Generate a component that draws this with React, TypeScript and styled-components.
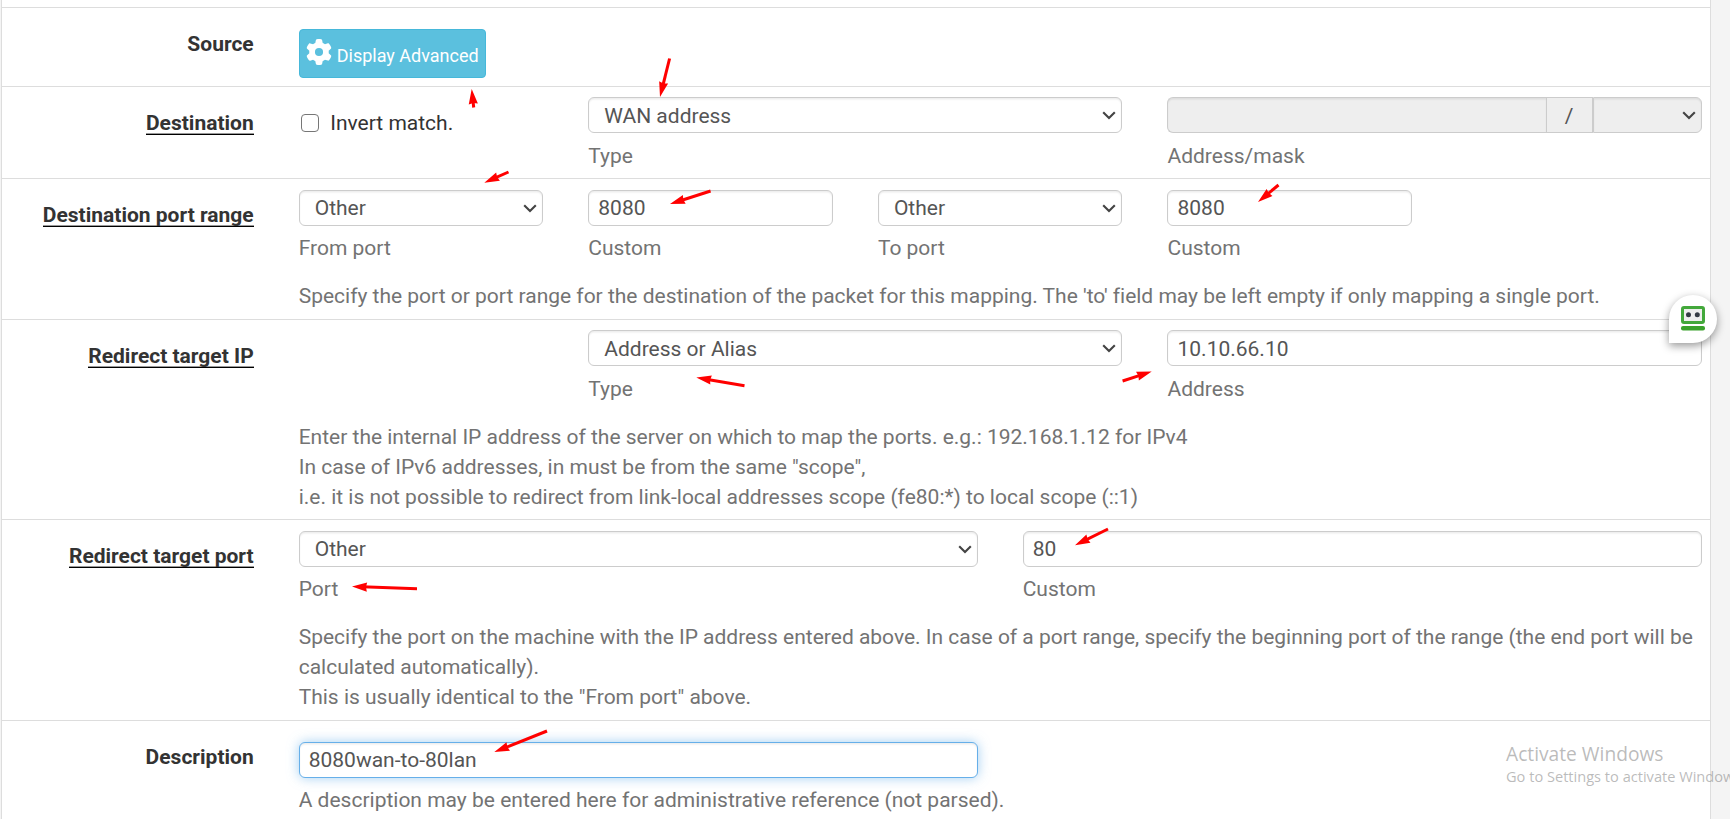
import React from "react";
import styled, { createGlobalStyle, css } from "styled-components";
import { FaGear } from "react-icons/fa6";

const GlobalStyle = createGlobalStyle`
  *, *::before, *::after { box-sizing: border-box; }
  html, body { margin: 0; height: 100%; overflow: hidden; background: #f4f4f4; }
  body { font-family: Roboto, "Liberation Sans", sans-serif; font-size: 21px; line-height: 30px; color: #333; }
`;

const Page = styled.div`
  position: relative;
  width: 1730px;
  height: 819px;
  padding-left: 1px;
  overflow: hidden;
  background: #f4f4f4;
`;

const Panel = styled.main`
  width: 1710px;
  height: 819px;
  padding-top: 7px;
  background: #fff;
  border-left: 1px solid #ddd;
  border-right: 1px solid #ddd;
`;

const Row = styled.section<{ $height: number; $top: number }>`
  display: flex;
  height: ${(p) => p.$height}px;
  padding-top: ${(p) => p.$top}px;
  border-top: 1px solid #ddd;
`;

const LabelCell = styled.div<{ $offset: number }>`
  flex: none;
  width: 251.7px;
  margin-right: 45px;
  padding-top: ${(p) => p.$offset}px;
  text-align: right;
  font-weight: 700;
  line-height: 25px;
  white-space: nowrap;
`;

const LabelText = styled.span<{ $required?: boolean }>`
  display: inline-block;
  height: 24px;
  ${(p) => p.$required && css`border-bottom: 1px solid #000; box-shadow: inset 0 -1px #999;`}
`;

const Content = styled.div`
  flex: none;
  width: 1403px;
`;

const Fields = styled.div<{ $columns: number }>`
  display: grid;
  grid-template-columns: repeat(${(p) => p.$columns}, 1fr);
  column-gap: 45px;
`;

const Field = styled.div<{ $span?: number; $start?: number }>`
  grid-column: ${(p) => (p.$start ? p.$start : "auto")} / span ${(p) => p.$span ?? 1};
  min-width: 0;
`;

const control = css`
  display: flex;
  align-items: center;
  height: 36px;
  border: 1px solid #ccc;
  border-radius: 6px;
  background: #fff;
  box-shadow: inset 0 1.5px 1.5px rgba(0, 0, 0, 0.075);
  color: #555;
`;

const TextBox = styled.div<{ $focused?: boolean; $drop?: number }>`
  ${control}
  padding: ${(p) => p.$drop ?? 0}px 9px 0;
  ${(p) => p.$focused && css`
    border-color: #66afe9;
    box-shadow: inset 0 1.5px 1.5px rgba(0, 0, 0, 0.075), 0 0 12px rgba(102, 175, 233, 0.6);
  `}
`;

const SelectBox = styled.div<{ $drop?: number }>`
  ${control}
  justify-content: space-between;
  padding: ${(p) => p.$drop ?? 0}px 4px 0 15px;

  svg {
    margin-bottom: ${(p) => p.$drop ?? 0}px;
  }
`;

const Group = styled.div`
  display: flex;
  height: 36px;
`;

const GroupInput = styled.div`
  ${control}
  flex: 1;
  border-right: 0;
  border-radius: 6px 0 0 6px;
  background: #eee;
`;

const GroupAddon = styled.div`
  ${control}
  flex: none;
  justify-content: center;
  width: 47px;
  padding-top: 2px;
  border-radius: 0;
  background: #eee;
  box-shadow: none;
`;

const GroupSelect = styled.div`
  ${control}
  flex: none;
  justify-content: flex-end;
  width: 109px;
  padding-right: 4px;
  border-radius: 0 6px 6px 0;
  background: #eee;
`;

const Hint = styled.div<{ $gap?: number }>`
  margin-top: ${(p) => p.$gap ?? 7}px;
  color: #737373;
  white-space: nowrap;
`;

const Help = styled.p`
  margin: 18px 0 0;
  color: #737373;
  letter-spacing: -0.006px;
`;

const Button = styled.div`
  display: flex;
  align-items: center;
  gap: 4.5px;
  width: 187px;
  height: 49px;
  padding: 4px 7px 0 6.5px;
  border: 1px solid #46b8da;
  border-radius: 4px;
  background: #5bc0de;
  color: #fff;
  font-size: 18px;
  white-space: nowrap;

  svg {
    flex: none;
    margin-bottom: 7px;
  }
`;

const CheckLabel = styled.div`
  display: flex;
  align-items: center;
  height: 30px;
  margin-top: 11px;
  padding-left: 2px;
`;

const CheckBox = styled.span`
  width: 18px;
  height: 18px;
  margin-right: 11.5px;
  border: 1.5px solid #767676;
  border-radius: 4px;
`;

const ArrowLayer = styled.svg`
  position: absolute;
  inset: 0;
  pointer-events: none;
`;

const Bubble = styled.div`
  position: absolute;
  left: 1669px;
  top: 295px;
  width: 48px;
  height: 48px;
  padding: 11px 12px;
  border-radius: 50% 50% 50% 0;
  background: #fff;
  box-shadow: 0 3px 9px rgba(0, 0, 0, 0.4);
  line-height: 0;
`;

const Watermark = styled.div`
  position: absolute;
  left: 1506px;
  top: 741px;
  color: rgba(120, 120, 120, 0.5);
  font-family: "Open Sans", "Noto Sans", sans-serif;
  font-size: 14.6px;
  line-height: 19px;
  white-space: nowrap;
`;

const WatermarkTitle = styled.div`
  font-size: 19.2px;
  line-height: 26px;
`;

const Chevron = () => (
  <svg width="16" height="16" viewBox="0 0 16 16" fill="none" stroke="#444" strokeWidth="2.1">
    <path d="M2.200 5.200l5.800 5.800 5.800-5.800" />
  </svg>
);

/* Each entry: tail x, tail y, tip x, tip y */
const arrows: number[][] = [
  [473.7, 107.5, 471.7, 89],
  [508.5, 172, 484.3, 182.7],
  [669.6, 58.5, 660, 97],
  [710.6, 191, 670, 204],
  [1278.5, 185, 1258, 202],
  [744.5, 385.8, 696.3, 377.5],
  [1122.6, 381, 1151.7, 371.5],
  [1108, 529, 1075, 545.3],
  [417, 588.8, 352, 586.5],
  [547, 731, 494.3, 752],
];

const Arrow = ({ points }: { points: number[] }) => {
  const [x1, y1, x2, y2] = points;
  const length = Math.hypot(x2 - x1, y2 - y1);
  const angle = (Math.atan2(y2 - y1, x2 - x1) * 180) / Math.PI;
  return (
    <g transform={`translate(${x2} ${y2}) rotate(${angle})`}>
      <path d={`M${-length} 0H-10`} stroke="#f00" strokeWidth="3" />
      <path d="M0 0L-15 -4.600L-14 0L-15 4.600Z" fill="#f00" />
    </g>
  );
};

export default function App() {
  return (
    <Page>
      <GlobalStyle />
      <Panel>
        <Row $height={79} $top={21}>
          <LabelCell $offset={3}><LabelText>Source</LabelText></LabelCell>
          <Content>
            <Button><FaGear size={26} /><span>Display Advanced</span></Button>
          </Content>
        </Row>

        <Row $height={92} $top={10}>
          <LabelCell $offset={14}><LabelText $required>Destination</LabelText></LabelCell>
          <Content>
            <Fields $columns={5}>
              <Field><CheckLabel><CheckBox />Invert match.</CheckLabel></Field>
              <Field $span={2}>
                <SelectBox $drop={2}>WAN address<Chevron /></SelectBox>
                <Hint $gap={8}>Type</Hint>
              </Field>
              <Field $span={2}>
                <Group>
                  <GroupInput />
                  <GroupAddon>/</GroupAddon>
                  <GroupSelect><Chevron /></GroupSelect>
                </Group>
                <Hint $gap={8}>Address/mask</Hint>
              </Field>
            </Fields>
          </Content>
        </Row>

        <Row $height={141} $top={11}>
          <LabelCell $offset={13}><LabelText $required>Destination port range</LabelText></LabelCell>
          <Content>
            <Fields $columns={5}>
              <Field><SelectBox>Other<Chevron /></SelectBox><Hint>From port</Hint></Field>
              <Field><TextBox>8080</TextBox><Hint>Custom</Hint></Field>
              <Field><SelectBox>Other<Chevron /></SelectBox><Hint>To port</Hint></Field>
              <Field><TextBox>8080</TextBox><Hint>Custom</Hint></Field>
            </Fields>
            <Help>
              Specify the port or port range for the destination of the packet for this mapping. The 'to' field may be left empty if only mapping a single port.
            </Help>
          </Content>
        </Row>

        <Row $height={200} $top={10}>
          <LabelCell $offset={14}><LabelText $required>Redirect target IP</LabelText></LabelCell>
          <Content>
            <Fields $columns={5}>
              <Field $start={2} $span={2}>
                <SelectBox $drop={2}>Address or Alias<Chevron /></SelectBox>
                <Hint $gap={8}>Type</Hint>
              </Field>
              <Field $span={2}><TextBox $drop={2}>10.10.66.10</TextBox><Hint $gap={8}>Address</Hint></Field>
            </Fields>
            <Help>
              Enter the internal IP address of the server on which to map the ports. e.g.: 192.168.1.12 for IPv4<br />
              In case of IPv6 addresses, in must be from the same "scope",<br />
              i.e. it is not possible to redirect from link-local addresses scope (fe80:*) to local scope (::1)
            </Help>
          </Content>
        </Row>

        <Row $height={201} $top={11}>
          <LabelCell $offset={13}><LabelText $required>Redirect target port</LabelText></LabelCell>
          <Content>
            <Fields $columns={2}>
              <Field><SelectBox>Other<Chevron /></SelectBox><Hint>Port</Hint></Field>
              <Field><TextBox>80</TextBox><Hint>Custom</Hint></Field>
            </Fields>
            <Help>
              Specify the port on the machine with the IP address entered above. In case of a port range, specify the beginning port of the range (the end port will be calculated automatically).<br />
              This is usually identical to the "From port" above.
            </Help>
          </Content>
        </Row>

        <Row $height={98} $top={21}>
          <LabelCell $offset={3}><LabelText>Description</LabelText></LabelCell>
          <Content>
            <Fields $columns={2}>
              <Field>
                <TextBox $focused>8080wan-to-80lan</TextBox>
                <Hint>A description may be entered here for administrative reference (not parsed).</Hint>
              </Field>
            </Fields>
          </Content>
        </Row>
      </Panel>

      <ArrowLayer width="1730" height="819">
        {arrows.map((points, i) => <Arrow key={i} points={points} />)}
      </ArrowLayer>

      <Bubble>
        <svg width="24" height="25" viewBox="0 0 24 25">
          <rect x="1.500" y="1.500" width="21" height="15" rx="1.500" fill="#eee" stroke="#43a83b" strokeWidth="3" />
          <circle cx="7.500" cy="8.700" r="2.500" fill="#343a44" />
          <circle cx="16.300" cy="8.700" r="2.500" fill="#343a44" />
          <rect y="20" width="24" height="4.500" rx="2" fill="#3aa22c" />
        </svg>
      </Bubble>

      <Watermark>
        <WatermarkTitle>Activate Windows</WatermarkTitle>
        Go to Settings to activate Windows.
      </Watermark>
    </Page>
  );
}
